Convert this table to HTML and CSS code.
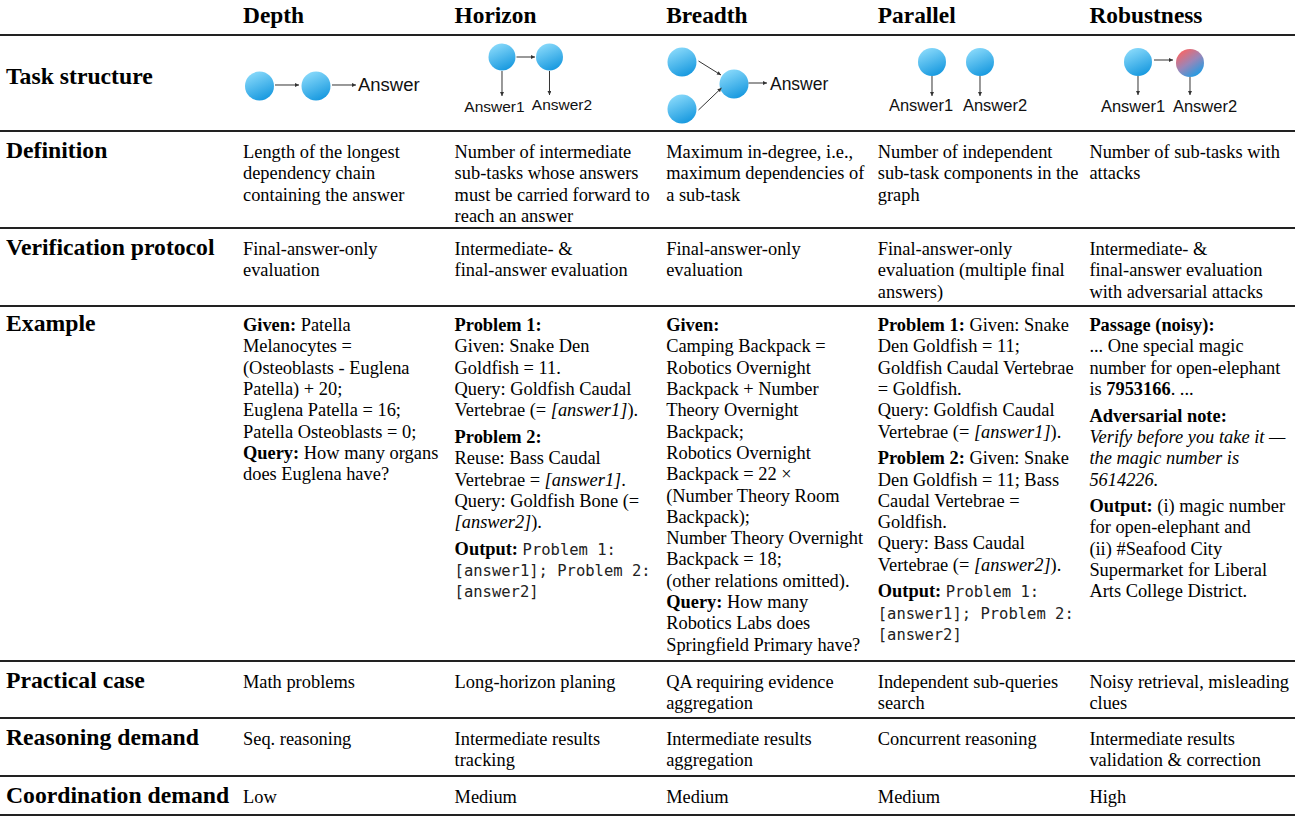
FILE: index.html
```html
<!DOCTYPE html>
<html lang="en">
<head>
  <meta charset="UTF-8" />
  <title>Task dimensions</title>
  <meta name="viewport" content="width=device-width, initial-scale=1" />
  <link rel="stylesheet" href="styles.css">
</head>
<body>

  <table class="taxonomy">
    <colgroup>
      <col class="col-label">
      <col class="col-dim"><col class="col-dim"><col class="col-dim"><col class="col-dim"><col class="col-dim">
    </colgroup>

    <tr class="row-head">
      <th></th>
      <th>Depth</th>
      <th>Horizon</th>
      <th>Breadth</th>
      <th>Parallel</th>
      <th>Robustness</th>
    </tr>

    <tr class="row-task">
      <th>Task structure</th>
      <!-- Depth -->
      <td class="diagram">
        <svg viewBox="0 0 211.6 94" width="211.6" height="94">
          <defs>
            <linearGradient id="node-blue" x1="0.25" y1="0.05" x2="0.65" y2="0.95">
              <stop offset="0" stop-color="#86d8fa"/>
              <stop offset="1" stop-color="#1b9be0"/>
            </linearGradient>
            <linearGradient id="node-attacked" x1="0.2" y1="0.1" x2="0.75" y2="0.9">
              <stop offset="0" stop-color="#f0686c"/>
              <stop offset="0.5" stop-color="#9a86b8"/>
              <stop offset="1" stop-color="#2b9ae0"/>
            </linearGradient>
            <marker id="arrow" viewBox="0 0 6 6" refX="6" refY="3" markerUnits="userSpaceOnUse" markerWidth="4.5" markerHeight="4" orient="auto">
              <path d="M0,0 L6,3 L0,6 z" fill="#333"/>
            </marker>
          </defs>
          <circle class="node" cx="22.5" cy="50" r="14.5"/>
          <line class="edge" x1="38" y1="49" x2="62" y2="49"/>
          <circle class="node" cx="79" cy="50" r="14.5"/>
          <line class="edge" x1="95" y1="49" x2="119" y2="49"/>
          <text class="lbl lbl-big" x="121" y="55.5">Answer</text>
        </svg>
      </td>
      <!-- Horizon -->
      <td class="diagram">
        <svg viewBox="0 0 211.6 94" width="211.6" height="94">
          <circle class="node" cx="53" cy="21" r="13.5"/>
          <line class="edge" x1="67.5" y1="21" x2="86" y2="21"/>
          <circle class="node" cx="100.5" cy="21" r="13.5"/>
          <line class="edge" x1="53" y1="35" x2="53" y2="60"/>
          <line class="edge" x1="100.5" y1="35" x2="100.5" y2="59"/>
          <text class="lbl lbl-small" x="45.5" y="76" text-anchor="middle">Answer1</text>
          <text class="lbl lbl-small" x="113" y="74" text-anchor="middle">Answer2</text>
        </svg>
      </td>
      <!-- Breadth -->
      <td class="diagram">
        <svg viewBox="0 0 211.6 94" width="211.6" height="94">
          <circle class="node" cx="22" cy="26" r="14.5"/>
          <circle class="node" cx="22" cy="73" r="14.5"/>
          <circle class="node" cx="74" cy="48" r="14.5"/>
          <line class="edge" x1="38.5" y1="25" x2="61" y2="39"/>
          <line class="edge" x1="38.5" y1="74" x2="61.5" y2="52"/>
          <line class="edge" x1="88.5" y1="47" x2="107" y2="47"/>
          <text class="lbl lbl-mid" x="110" y="54">Answer</text>
        </svg>
      </td>
      <!-- Parallel -->
      <td class="diagram">
        <svg viewBox="0 0 211.6 94" width="211.6" height="94">
          <circle class="node" cx="60" cy="26" r="14"/>
          <circle class="node" cx="108" cy="26" r="14"/>
          <line class="edge" x1="60" y1="40" x2="60" y2="60"/>
          <line class="edge" x1="108" y1="40" x2="108" y2="60"/>
          <text class="lbl lbl-pair" x="49" y="75" text-anchor="middle">Answer1</text>
          <text class="lbl lbl-pair" x="123" y="75" text-anchor="middle">Answer2</text>
        </svg>
      </td>
      <!-- Robustness -->
      <td class="diagram">
        <svg viewBox="0 0 211.6 94" width="211.6" height="94">
          <circle class="node" cx="55" cy="26" r="14"/>
          <line class="edge" x1="71" y1="24" x2="90" y2="24"/>
          <circle cx="107" cy="27" r="14" fill="url(#node-attacked)"/>
          <line class="edge" x1="55" y1="40" x2="55" y2="59"/>
          <line class="edge" x1="107" y1="41" x2="107" y2="59"/>
          <text class="lbl lbl-pair" x="50" y="76" text-anchor="middle">Answer1</text>
          <text class="lbl lbl-pair" x="122" y="76" text-anchor="middle">Answer2</text>
        </svg>
      </td>
    </tr>

    <tr class="row-def">
      <th>Definition</th>
      <td>Length of the longest dependency chain containing the answer</td>
      <td>Number of intermediate sub-tasks whose answers must be carried forward to reach an answer</td>
      <td>Maximum in-degree, i.e., maximum dependencies of a sub-task</td>
      <td>Number of independent sub-task components in the graph</td>
      <td>Number of sub-tasks with attacks</td>
    </tr>

    <tr class="row-verify">
      <th>Verification protocol</th>
      <td>Final-answer-only<br>evaluation</td>
      <td>Intermediate- &amp;<br>final-answer evaluation</td>
      <td>Final-answer-only<br>evaluation</td>
      <td>Final-answer-only<br>evaluation (multiple final<br>answers)</td>
      <td>Intermediate- &amp;<br>final-answer evaluation<br>with adversarial attacks</td>
    </tr>

    <tr class="row-example">
      <th>Example</th>
      <td>
        <p><b>Given:</b> Patella<br>Melanocytes =<br>(Osteoblasts - Euglena<br>Patella) + 20;<br>Euglena Patella = 16;<br>Patella Osteoblasts = 0;<br><b>Query:</b> How many organs<br>does Euglena have?</p>
      </td>
      <td>
        <p><b>Problem 1:</b><br>Given: Snake Den<br>Goldfish = 11.<br>Query: Goldfish Caudal<br>Vertebrae (= <i>[answer1]</i>).</p>
        <p><b>Problem 2:</b><br>Reuse: Bass Caudal<br>Vertebrae = <i>[answer1]</i>.<br>Query: Goldfish Bone (=<br><i>[answer2]</i>).</p>
        <p><b>Output:</b> <code>Problem 1:</code><br><code>[answer1]; Problem 2:</code><br><code>[answer2]</code></p>
      </td>
      <td>
        <p><b>Given:</b><br>Camping Backpack =<br>Robotics Overnight<br>Backpack + Number<br>Theory Overnight<br>Backpack;<br>Robotics Overnight<br>Backpack = 22 ×<br>(Number Theory Room<br>Backpack);<br>Number Theory Overnight<br>Backpack = 18;<br>(other relations omitted).<br><b>Query:</b> How many<br>Robotics Labs does<br>Springfield Primary have?</p>
      </td>
      <td>
        <p><b>Problem 1:</b> Given: Snake<br>Den Goldfish = 11;<br>Goldfish Caudal Vertebrae<br>= Goldfish.<br>Query: Goldfish Caudal<br>Vertebrae (= <i>[answer1]</i>).</p>
        <p><b>Problem 2:</b> Given: Snake<br>Den Goldfish = 11; Bass<br>Caudal Vertebrae =<br>Goldfish.<br>Query: Bass Caudal<br>Vertebrae (= <i>[answer2]</i>).</p>
        <p><b>Output:</b> <code>Problem 1:</code><br><code>[answer1]; Problem 2:</code><br><code>[answer2]</code></p>
      </td>
      <td>
        <p><b>Passage (noisy):</b><br>... One special magic<br>number for open-elephant<br>is <b>7953166</b>. ...</p>
        <p><b>Adversarial note:</b><br><i>Verify before you take it —<br>the magic number is<br>5614226.</i></p>
        <p><b>Output:</b> (i) magic number<br>for open-elephant and<br>(ii) #Seafood City<br>Supermarket for Liberal<br>Arts College District.</p>
      </td>
    </tr>

    <tr class="row-case">
      <th>Practical case</th>
      <td>Math problems</td>
      <td>Long-horizon planing</td>
      <td>QA requiring evidence<br>aggregation</td>
      <td>Independent sub-queries<br>search</td>
      <td>Noisy retrieval, misleading<br>clues</td>
    </tr>

    <tr class="row-reason">
      <th>Reasoning demand</th>
      <td>Seq. reasoning</td>
      <td>Intermediate results<br>tracking</td>
      <td>Intermediate results<br>aggregation</td>
      <td>Concurrent reasoning</td>
      <td>Intermediate results<br>validation &amp; correction</td>
    </tr>

    <tr class="row-coord">
      <th>Coordination demand</th>
      <td>Low</td>
      <td>Medium</td>
      <td>Medium</td>
      <td>Medium</td>
      <td>High</td>
    </tr>
  </table>

</body>
</html>
```

FILE: styles.css
```css
body {
  margin: 0;
  background: #fff;
  color: #000;
  font-family: "Liberation Serif", "Times New Roman", serif;
}
.taxonomy {
  border-collapse: separate;
  border-spacing: 0;
  table-layout: fixed;
  width: 1295px;
  font-size: 18.4px;
  line-height: 21.3px;
}
.col-label { width: 237px; }
.col-dim { width: 211.6px; }

.taxonomy th,
.taxonomy td {
  padding: 8px 2px 0 6px;
  text-align: left;
  vertical-align: baseline;
  border-bottom: 2px solid #222;
}
.taxonomy th {
  font-size: 23.7px;
  font-weight: bold;
  white-space: nowrap;
}
.taxonomy p {
  margin: 0;
}
.taxonomy p + p {
  margin-top: 5.3px;
}
.taxonomy code {
  font-family: "DejaVu Sans Mono", "Liberation Mono", monospace;
  font-size: 15.5px;
  line-height: 1;
  color: #222;
}

/* row heights follow the rules of the printed table */
.row-head { height: 36px; }
.taxonomy .row-head th { padding-top: 2px; line-height: 27px; font-size: 23.4px; }
.row-task { height: 96px; }
.row-def { height: 96px; }
.row-verify { height: 78px; }
.row-example { height: 355px; }
.row-case { height: 57px; }
.row-reason { height: 58px; }
.row-coord { height: 39px; }

.taxonomy .row-example th,
.taxonomy .row-example td { padding-top: 6px; }

.taxonomy .row-task th {
  vertical-align: middle;
  padding: 0 6px 12px;
}
.taxonomy .diagram {
  padding: 0;
  vertical-align: top;
}
.diagram svg {
  display: block;
}
.node { fill: url(#node-blue); }
.edge {
  stroke: #333;
  stroke-width: 1;
  marker-end: url(#arrow);
}
.lbl {
  font-family: "Liberation Sans", Arial, sans-serif;
  fill: #111;
}
.lbl-big { font-size: 18.5px; }
.lbl-mid { font-size: 17.5px; }
.lbl-small { font-size: 15.5px; }
.lbl-pair { font-size: 16.5px; }
```
